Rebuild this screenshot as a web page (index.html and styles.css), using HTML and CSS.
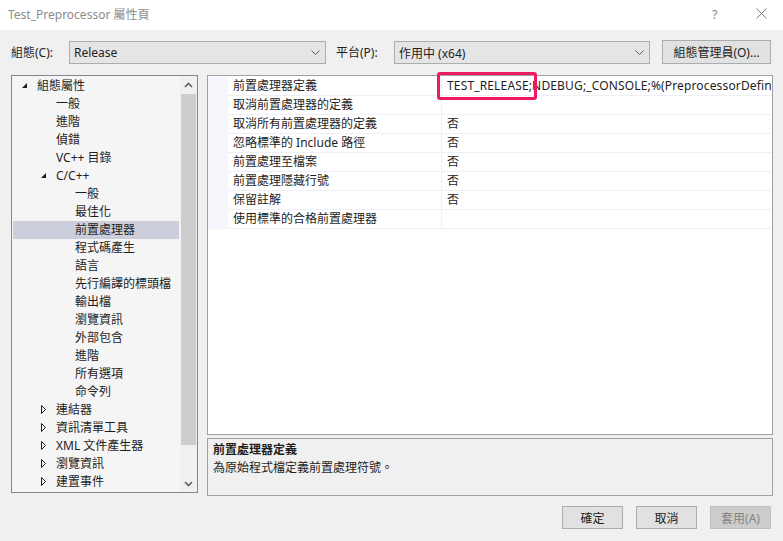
FILE: index.html
```html
<!DOCTYPE html>
<html lang="zh-Hant">
<head>
<meta charset="utf-8">
<title>Test_Preprocessor 屬性頁</title>
<link rel="stylesheet" href="styles.css">
</head>
<body>
<div class="window">
  <div class="titlebar">
    <span class="title">Test_Preprocessor 屬性頁</span>
    <span class="tb-help">?</span>
    <span class="tb-close"><svg width="11" height="11" viewBox="0 0 11 11"><path d="M0.5 0.5 L10.5 10.5 M10.5 0.5 L0.5 10.5" stroke="#7a7a7a" stroke-width="1" fill="none"/></svg></span>
  </div>

  <div class="toolbar">
    <span class="lbl">組態(C):</span>
    <div class="combo combo-config"><span>Release</span><svg class="chev" width="9" height="5" viewBox="0 0 9 5"><path d="M0.5 0.5 L4.5 4.5 L8.5 0.5" stroke="#606060" fill="none"/></svg></div>
    <span class="lbl lbl-platform">平台(P):</span>
    <div class="combo combo-platform"><span>作用中 (x64)</span><svg class="chev" width="9" height="5" viewBox="0 0 9 5"><path d="M0.5 0.5 L4.5 4.5 L8.5 0.5" stroke="#606060" fill="none"/></svg></div>
    <button class="btn btn-manager">組態管理員(O)...</button>
  </div>

  <div class="main">
    <div class="tree">
      <ul class="tree-list">
        <li class="row l1"><span class="tog"><svg width="6" height="6" viewBox="0 0 6 6"><path d="M5 0 L5 5 L0 5 Z" fill="#1e1e1e"/></svg></span>組態屬性</li>
        <li class="row l2"><span class="tog"></span>一般</li>
        <li class="row l2"><span class="tog"></span>進階</li>
        <li class="row l2"><span class="tog"></span>偵錯</li>
        <li class="row l2"><span class="tog"></span>VC++ 目錄</li>
        <li class="row l2"><span class="tog"><svg width="6" height="6" viewBox="0 0 6 6"><path d="M5 0 L5 5 L0 5 Z" fill="#1e1e1e"/></svg></span>C/C++</li>
        <li class="row l3"><span class="tog"></span>一般</li>
        <li class="row l3"><span class="tog"></span>最佳化</li>
        <li class="row l3 sel"><span class="tog"></span>前置處理器</li>
        <li class="row l3"><span class="tog"></span>程式碼產生</li>
        <li class="row l3"><span class="tog"></span>語言</li>
        <li class="row l3"><span class="tog"></span>先行編譯的標頭檔</li>
        <li class="row l3"><span class="tog"></span>輸出檔</li>
        <li class="row l3"><span class="tog"></span>瀏覽資訊</li>
        <li class="row l3"><span class="tog"></span>外部包含</li>
        <li class="row l3"><span class="tog"></span>進階</li>
        <li class="row l3"><span class="tog"></span>所有選項</li>
        <li class="row l3"><span class="tog"></span>命令列</li>
        <li class="row l2"><span class="tog"><svg width="6" height="10" viewBox="0 0 6 10"><path d="M0.5 0.5 L4.5 4.5 L0.5 8.5 Z" stroke="#1e1e1e" fill="none"/></svg></span>連結器</li>
        <li class="row l2"><span class="tog"><svg width="6" height="10" viewBox="0 0 6 10"><path d="M0.5 0.5 L4.5 4.5 L0.5 8.5 Z" stroke="#1e1e1e" fill="none"/></svg></span>資訊清單工具</li>
        <li class="row l2"><span class="tog"><svg width="6" height="10" viewBox="0 0 6 10"><path d="M0.5 0.5 L4.5 4.5 L0.5 8.5 Z" stroke="#1e1e1e" fill="none"/></svg></span>XML 文件產生器</li>
        <li class="row l2"><span class="tog"><svg width="6" height="10" viewBox="0 0 6 10"><path d="M0.5 0.5 L4.5 4.5 L0.5 8.5 Z" stroke="#1e1e1e" fill="none"/></svg></span>瀏覽資訊</li>
        <li class="row l2"><span class="tog"><svg width="6" height="10" viewBox="0 0 6 10"><path d="M0.5 0.5 L4.5 4.5 L0.5 8.5 Z" stroke="#1e1e1e" fill="none"/></svg></span>建置事件</li>
      </ul>
      <div class="vscroll">
        <div class="sb-arrow"><svg width="9" height="6" viewBox="0 0 9 6"><path d="M1 5 L4.5 1.5 L8 5" stroke="#606060" stroke-width="1.6" fill="none"/></svg></div>
        <div class="sb-track"><div class="sb-thumb"></div></div>
        <div class="sb-arrow"><svg width="9" height="6" viewBox="0 0 9 6"><path d="M1 1 L4.5 4.5 L8 1" stroke="#606060" stroke-width="1.6" fill="none"/></svg></div>
      </div>
    </div>

    <div class="right">
      <div class="grid">
        <div class="grid-rows">
          <div class="grow first"><div class="gname">前置處理器定義</div><div class="gval">TEST_RELEASE;NDEBUG;_CONSOLE;%(PreprocessorDefinitions)</div><span class="mark"></span></div>
          <div class="grow"><div class="gname">取消前置處理器的定義</div><div class="gval"></div></div>
          <div class="grow"><div class="gname">取消所有前置處理器的定義</div><div class="gval">否</div></div>
          <div class="grow"><div class="gname">忽略標準的 Include 路徑</div><div class="gval">否</div></div>
          <div class="grow"><div class="gname">前置處理至檔案</div><div class="gval">否</div></div>
          <div class="grow"><div class="gname">前置處理隱藏行號</div><div class="gval">否</div></div>
          <div class="grow"><div class="gname">保留註解</div><div class="gval">否</div></div>
          <div class="grow"><div class="gname">使用標準的合格前置處理器</div><div class="gval"></div></div>
        </div>
      </div>
      <div class="desc">
        <div class="desc-title">前置處理器定義</div>
        <div class="desc-text">為原始程式檔定義前置處理符號。</div>
      </div>
    </div>
  </div>

  <div class="footer">
    <button class="btn fbtn">確定</button>
    <button class="btn fbtn">取消</button>
    <button class="btn fbtn disabled">套用(A)</button>
  </div>
</div>
</body>
</html>
```

FILE: styles.css
```css
html, body {
  margin: 0;
  padding: 0;
}
body {
  width: 783px;
  height: 541px;
  overflow: hidden;
  background: #f0f0f0;
  font-family: "Segoe UI", "Noto Sans", "Noto Sans CJK TC", sans-serif;
  font-size: 12px;
  color: #1e1e1e;
}
.window {
  width: 783px;
  height: 541px;
  display: flex;
  flex-direction: column;
}
.titlebar {
  height: 30px;
  background: #ffffff;
  display: flex;
  align-items: center;
  padding-left: 8px;
  box-sizing: border-box;
  flex: none;
}
.title {
  color: #8c8c8c;
  font-size: 12px;
  flex: 1;
  margin-top: -3px;
}
.tb-help {
  color: #8c8c8c;
  font-size: 13px;
  width: 44px;
  margin-top: -3px;
}
.tb-close {
  width: 27px;
  display: flex;
  margin-top: -3px;
}
.toolbar {
  display: flex;
  align-items: center;
  height: 45px;
  padding: 0 12px 0 11px;
  box-sizing: border-box;
  flex: none;
}
.lbl {
  width: 58px;
  flex: none;
  line-height: 16px;
}
.lbl-platform {
  margin-left: 10px;
}
.combo {
  height: 23px;
  box-sizing: border-box;
  border: 1px solid #adadad;
  background: #e5e5e5;
  display: flex;
  align-items: center;
  padding: 0 5px 0 4px;
  flex: none;
}
.combo span {
  flex: 1;
}
.combo-config {
  width: 257px;
}
.combo-platform {
  width: 256px;
}
.btn {
  font-family: inherit;
  font-size: 12px;
  color: #1e1e1e;
  background: #e1e1e1;
  border: 1px solid #adadad;
  box-sizing: border-box;
  padding: 0;
  margin: 0;
}
.btn-manager {
  margin-left: 12px;
  width: 109px;
  height: 24px;
  margin-top: -1px;
}
.main {
  display: flex;
  height: 421px;
  padding-left: 11px;
  flex: none;
}
.tree {
  width: 187px;
  height: 418px;
  box-sizing: border-box;
  border: 1px solid #828790;
  background: #f5f5f5;
  display: flex;
  flex: none;
}
.tree-list {
  list-style: none;
  margin: 0;
  padding: 1px 0 0 0;
  flex: 1;
  overflow: hidden;
}
.row {
  height: 18px;
  line-height: 18px;
  display: flex;
  align-items: center;
  white-space: nowrap;
  margin-right: 1px;
}
.row.sel {
  background: #cccedb;
  margin-left: 1px;
}
.row.sel.l3 { padding-left: 46px; }
.tog {
  width: 16px;
  flex: none;
  display: flex;
  align-items: center;
  padding-left: 1px;
  box-sizing: border-box;
}
.l1 { padding-left: 9px; }
.l2 { padding-left: 28px; }
.l3 { padding-left: 47px; }
.vscroll {
  width: 17px;
  flex: none;
  background: #f0f0f0;
  display: flex;
  flex-direction: column;
}
.sb-arrow {
  height: 17px;
  display: flex;
  align-items: center;
  justify-content: center;
  flex: none;
}
.sb-track {
  flex: 1;
  padding: 1px 1px 0 1px;
}
.sb-thumb {
  height: 351px;
  background: #cdcdcd;
}
.right {
  display: flex;
  flex-direction: column;
  margin-left: 9px;
  width: 566px;
}
.grid {
  height: 360px;
  box-sizing: border-box;
  border: 1px solid #a0a0a0;
  background: #ffffff;
  padding-top: 1px;
}
.grid-rows {
  padding-left: 20px;
  background: #f5f7fc;
}
.grow {
  display: flex;
  height: 19px;
  box-sizing: border-box;
  border-bottom: 1px solid #eef0f5;
  background: #ffffff;
  line-height: 18px;
}
.grow.first {
  position: relative;
  z-index: 2;
}
.gname {
  width: 214px;
  flex: none;
  box-sizing: border-box;
  padding-left: 5px;
  border-right: 1px solid #eef0f5;
  white-space: nowrap;
}
.gval {
  flex: 1;
  min-width: 0;
  padding-left: 5px;
  white-space: nowrap;
  overflow: hidden;
  letter-spacing: 0.15px;
}
.mark {
  position: absolute;
  left: 209px;
  top: -5px;
  width: 100px;
  height: 28px;
  box-sizing: border-box;
  border: 3px solid #ec1a62;
  border-radius: 3px;
  z-index: 3;
}
.desc {
  margin-top: 3px;
  height: 58px;
  box-sizing: border-box;
  border: 1px solid #a0a0a0;
  padding: 2px 0 0 5px;
  line-height: 18px;
}
.desc-title {
  font-weight: bold;
}
.footer {
  display: flex;
  justify-content: flex-end;
  gap: 13px;
  padding: 10px 12px 0 0;
}
.fbtn {
  width: 61px;
  height: 23px;
}
.fbtn.disabled {
  background: #cccccc;
  border-color: #bfbfbf;
  color: #838383;
}
```
